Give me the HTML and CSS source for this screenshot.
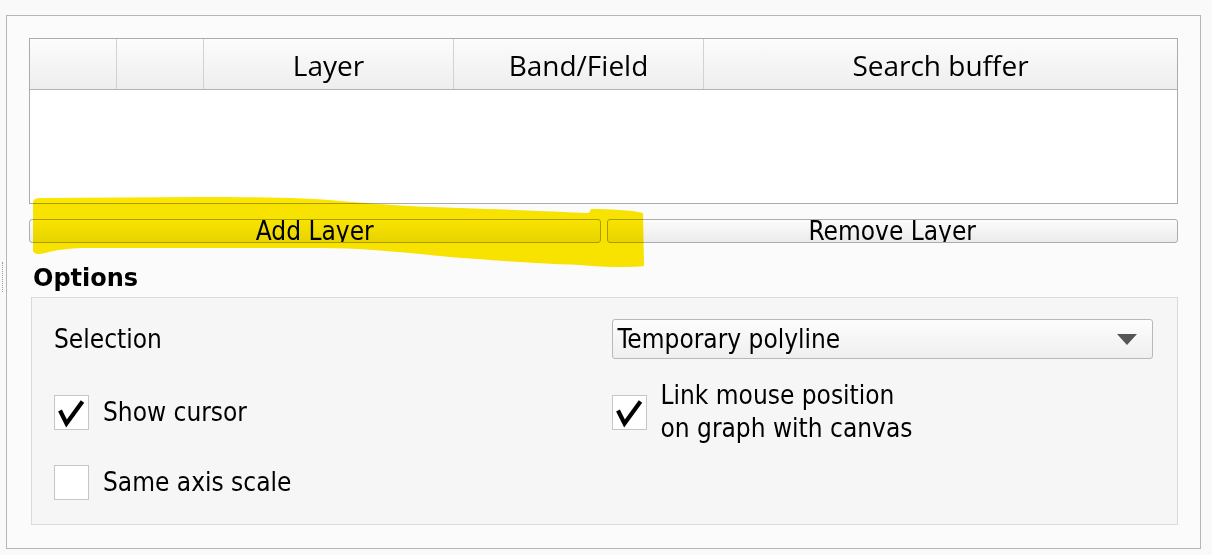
FILE: index.html
```html
<!DOCTYPE html>
<html>
<head>
<meta charset="utf-8">
<link rel="stylesheet" href="styles.css">
</head>
<body>
  <div class="handle"><span class="grip"></span></div>
  <div class="frame">
    <div class="table">
      <div class="thead">
        <div class="th"></div>
        <div class="th sep"></div>
        <div class="th sep">Layer</div>
        <div class="th sep">Band/Field</div>
        <div class="th sep">Search buffer</div>
      </div>
      <div class="tbody"></div>
    </div>
    <div class="buttons">
      <button class="btn">Add Layer</button>
      <button class="btn">Remove Layer</button>
    </div>
    <div class="options-label">Options</div>
    <div class="group">
      <div class="label">Selection</div>
      <div class="combo">
        <span class="combo-text">Temporary polyline</span>
        <svg class="arrow" width="20" height="11" viewBox="0 0 20 11"><path d="M0 0 H20 L10 11 Z" fill="#555"/></svg>
      </div>
      <div class="check">
        <span class="box"><svg width="33" height="33" viewBox="0 0 33 33"><path d="M5 14.5 L11.5 27.5 L27.5 5.5" fill="none" stroke="#000" stroke-width="4.2" stroke-linejoin="miter"/></svg></span>
        <span class="check-text">Show cursor</span>
      </div>
      <div class="check">
        <span class="box"><svg width="33" height="33" viewBox="0 0 33 33"><path d="M5 14.5 L11.5 27.5 L27.5 5.5" fill="none" stroke="#000" stroke-width="4.2" stroke-linejoin="miter"/></svg></span>
        <span class="check-text">Link mouse position<br>on graph with canvas</span>
      </div>
      <div class="check">
        <span class="box"></span>
        <span class="check-text">Same axis scale</span>
      </div>
      <div></div>
    </div>
  </div>
  <svg class="highlight" width="1212" height="555" viewBox="0 0 1212 555">
    <path d="M33 203 Q33 198 40 198 L200 197 C260 197 310 198 340 201 C390 205 420 207 460 208 C520 210 560 212 589 213 L591 209 C610 209 630 210 643 213 L644 266 C630 268 600 267 580 265 C520 263 480 259 450 257 C400 252 360 248 320 248 L90 248 C70 248 55 250 45 253 C38 255 33 254 33 250 Z" fill="#fbe600"/>
  </svg>
</body>
</html>
```
FILE: styles.css
```css
html, body {
  margin: 0;
  padding: 0;
}
body {
  position: relative;
  width: 1212px;
  height: 555px;
  background: #f9f9f9;
  display: flex;
  align-items: flex-start;
  padding-top: 15px;
  box-sizing: border-box;
  overflow: hidden;
  font-family: "DejaVu Sans Condensed", "DejaVu Sans", sans-serif;
  font-stretch: condensed;
  color: #000;
}
.handle {
  width: 6px;
  flex: none;
}
.grip {
  display: block;
  margin-top: 247px;
  margin-left: 2px;
  width: 0;
  height: 30px;
  border-left: 1px dotted #9a9a9a;
}
.frame {
  width: 1195px;
  box-sizing: border-box;
  border: 1px solid #b6b6b6;
  background: #fbfbfb;
  padding: 22px 22px 23px 22px;
  display: flex;
  flex-direction: column;
}
.table {
  border: 1px solid #ababab;
  background: #fff;
}
.thead {
  display: grid;
  grid-template-columns: 86px 87px 250px 250px 1fr;
  height: 51px;
  box-sizing: border-box;
  border-bottom: 1px solid #b3b3b3;
  background: linear-gradient(#fcfcfc, #eeeeee);
}
.th {
  box-sizing: border-box;
  text-align: center;
  font-family: "Open Sans", sans-serif;
  font-stretch: normal;
  font-size: 28px;
  line-height: 48px;
  padding-top: 2px;
  white-space: nowrap;
  overflow: hidden;
}
.th.sep {
  border-left: 1px solid #d2d2d2;
}
.tbody {
  height: 113px;
}
.buttons {
  display: flex;
  gap: 6px;
  margin-top: 15px;
}
.btn {
  flex: 1;
  height: 24px;
  box-sizing: border-box;
  border: 1px solid #adadad;
  border-radius: 3px;
  background: linear-gradient(#fcfcfc, #ebebeb);
  padding: 0;
  margin: 0;
  overflow: hidden;
  font-family: inherit;
  font-stretch: condensed;
  font-size: 26px;
  line-height: 22px;
  text-align: center;
  color: #000;
  white-space: nowrap;
  display: block;
}
.options-label {
  margin-top: 20px;
  margin-left: 4px;
  font-family: "DejaVu Sans", sans-serif;
  font-stretch: normal;
  font-weight: bold;
  font-size: 24px;
  line-height: 30px;
}
.group {
  margin-top: 4px;
  margin-left: 2px;
  border: 1px solid #dadada;
  background: #f6f6f6;
  padding: 21px 24px 24px 22px;
  display: grid;
  grid-template-columns: 1fr 1fr;
  grid-template-rows: 40px 66px 35px;
  column-gap: 16px;
  row-gap: 20px;
  font-size: 26px;
}
.label {
  align-self: center;
  line-height: 33px;
}
.combo {
  box-sizing: border-box;
  height: 40px;
  border: 1px solid #b8b8b8;
  border-radius: 3px;
  background: linear-gradient(#fdfdfd, #efefef);
  display: flex;
  align-items: center;
  justify-content: space-between;
  padding: 0 15px 0 5px;
}
.combo-text {
  line-height: 33px;
  white-space: nowrap;
}
.arrow {
  display: block;
}
.check {
  display: flex;
  align-items: center;
  gap: 14px;
}
.box {
  width: 35px;
  height: 35px;
  box-sizing: border-box;
  border: 1px solid #c6c6c6;
  background: #fff;
  flex: none;
  display: flex;
  align-items: center;
  justify-content: center;
}
.box svg {
  display: block;
}
.check-text {
  line-height: 33px;
  white-space: nowrap;
}
.highlight {
  position: absolute;
  left: 0;
  top: 0;
  pointer-events: none;
  mix-blend-mode: multiply;
}
```
